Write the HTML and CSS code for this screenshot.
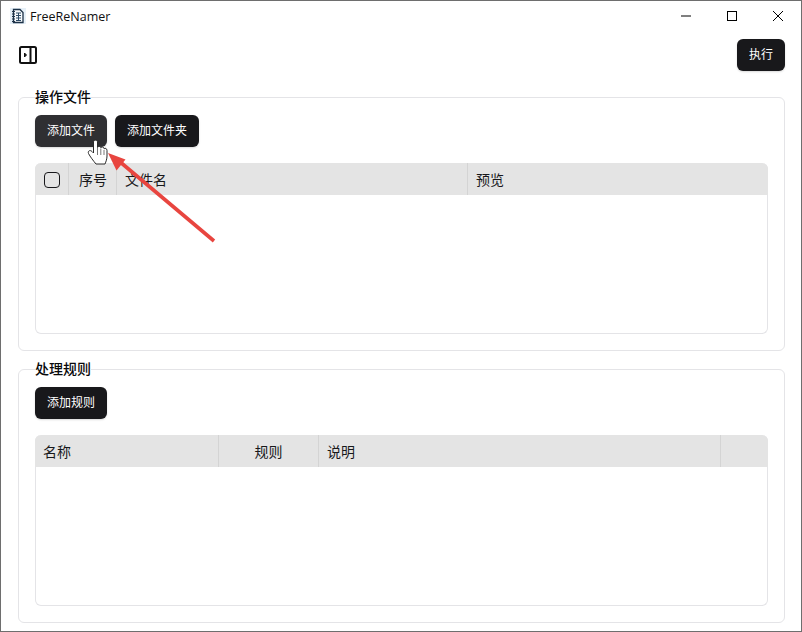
FILE: index.html
```html
<!DOCTYPE html>
<html lang="zh">
<head>
    <meta charset="UTF-8">
    <title>FreeReNamer</title>
    <link rel="stylesheet" href="styles.css">
</head>
<body>
    <div class="window">
        <div class="titlebar">
            <svg class="app-icon" width="16" height="16" viewBox="0 0 16 16">
                <rect x="0" y="0" width="16" height="16" fill="#e6f0f8"/>
                <path d="M3.500 1.500H10L13 4.500V14.500H3.500Z" fill="#f6fafd" stroke="#1d3248" stroke-width="1.300"/>
                <path d="M2 3.500H5M2 6H5M2 8.500H5M2 11H5M2 13.500H5" stroke="#1d3248" stroke-width="1.100"/>
                <path d="M6 5H11M6 7.500H11M6 10H11M6 12.500H11" stroke="#2c4a66" stroke-width="1.200"/>
                <path d="M8.500 5V13" stroke="#2c4a66" stroke-width="1"/>
            </svg>
            <span class="app-title">FreeReNamer</span>
            <div class="win-controls">
                <svg width="46" height="30" viewBox="0 0 46 30"><path d="M18 15H28" stroke="#000"/></svg>
                <svg width="46" height="30" viewBox="0 0 46 30"><rect x="18.500" y="10.500" width="9" height="9" fill="none" stroke="#000"/></svg>
                <svg width="46" height="30" viewBox="0 0 46 30"><path d="M18 10L28 20M28 10L18 20" stroke="#000" fill="none"/></svg>
            </div>
        </div>

        <div class="toolbar">
            <svg class="sidebar-icon" width="20" height="20" viewBox="0 0 20 20">
                <rect x="2" y="2" width="16" height="16" rx="1.500" fill="none" stroke="#111" stroke-width="2"/>
                <path d="M12.500 2V18" stroke="#111" stroke-width="2"/>
                <path d="M6.500 8L8.500 10L6.500 12Z" fill="#111" stroke="#111"/>
            </svg>
            <button class="btn">执行</button>
        </div>

        <fieldset class="group">
            <legend>操作文件</legend>
            <div class="actions">
                <button class="btn btn-hover">添加文件</button>
                <button class="btn">添加文件夹</button>
            </div>
            <div class="table">
                <div class="table-head">
                    <div class="cell cell-check"><span class="checkbox"></span></div>
                    <div class="cell cell-index">序号</div>
                    <div class="cell cell-file">文件名</div>
                    <div class="cell cell-grow">预览</div>
                </div>
            </div>
        </fieldset>

        <fieldset class="group">
            <legend>处理规则</legend>
            <div class="actions">
                <button class="btn">添加规则</button>
            </div>
            <div class="table">
                <div class="table-head">
                    <div class="cell cell-name">名称</div>
                    <div class="cell cell-rule">规则</div>
                    <div class="cell cell-grow">说明</div>
                    <div class="cell cell-op"></div>
                </div>
            </div>
        </fieldset>

        <!-- annotation over the page -->
        <svg class="annotation" width="802" height="632" viewBox="0 0 802 632">
            <path d="M214 241L119 161" stroke="#e8453f" stroke-width="3.600" fill="none"/>
            <path d="M108 153L125.500 159.500L116.500 170.500Z" fill="#e8453f"/>
            <path d="M96 164C93.500 161 90 156.500 88.500 153.500C87.500 151 90 149.500 92 151.500L93.500 153V142C93.500 139.500 97.500 139.500 97.500 142V147.500C98 146 100.500 146 101 147.800C101.500 146.500 104 146.800 104.200 148.800C105 147.800 107 148.300 107 150.500V156C107 159 106 161.500 105 164Z" fill="#fff" stroke="#2a2a2a" stroke-width="1"/>
            <path d="M97.500 148V155M100.800 148.500V155M104 150V155" stroke="#555" stroke-width="0.800"/>
        </svg>
    </div>
</body>
</html>
```

FILE: styles.css
```css
/* General Styles */
html, body {
    margin: 0;
    padding: 0;
    background: #fff;
}

body {
    font-family: "Noto Sans CJK SC", "Noto Sans", sans-serif;
    color: #18181b;
}

.window {
    position: relative;
    box-sizing: border-box;
    width: 802px;
    height: 632px;
    border: 1px solid #6e6e6e;
    overflow: hidden;
}

/* Title bar */
.titlebar {
    display: flex;
    align-items: center;
    height: 30px;
    padding-left: 9px;
}

.app-icon {
    margin-right: 4px;
}

.app-title {
    font-family: "Open Sans", "Noto Sans", sans-serif;
    font-size: 12.5px;
    color: #111;
}

.win-controls {
    display: flex;
    margin-left: auto;
}

.win-controls svg {
    display: block;
}

/* Toolbar */
.toolbar {
    display: flex;
    align-items: center;
    justify-content: space-between;
    height: 32px;
    margin-top: 8px;
    padding: 0 16px 0 17px;
}

.sidebar-icon {
    display: block;
}

.btn {
    box-sizing: border-box;
    height: 32px;
    padding: 0 12px 4px;
    border: 0;
    border-radius: 6px;
    background: #18181b;
    color: #fff;
    font-family: inherit;
    font-size: 12px;
    box-shadow: 0 1px 2px rgba(0, 0, 0, 0.15);
}

.btn-hover {
    background: #2f2f32;
}

/* Groups */
.group {
    box-sizing: border-box;
    height: 264px;
    margin: 0 16px 8px 17px;
    padding: 0 16px 16px;
    border: 1px solid #e4e4e7;
    border-radius: 6px;
    min-width: 0;
}

.toolbar + .group {
    margin-top: 16px;
}

.group legend {
    padding: 0 0 2px;
    font-size: 14px;
    font-weight: 500;
    line-height: 18px;
    color: #09090b;
}

.actions {
    display: flex;
    gap: 8px;
    margin-top: 8px;
}

.table {
    box-sizing: border-box;
    height: 171px;
    margin-top: 16px;
    border: 1px solid #e4e4e7;
    border-top: 0;
    border-radius: 6px;
}

.table-head {
    display: flex;
    height: 32px;
    margin: 0 -1px;
    background: #e4e4e4;
    border-radius: 6px 6px 0 0;
    font-size: 14px;
    line-height: 32px;
}

.cell {
    box-sizing: border-box;
    padding: 0 8px;
    border-right: 1px solid #d4d4d4;
}

.cell-check {
    display: flex;
    align-items: center;
    justify-content: center;
    width: 34px;
    padding: 2px 0 0;
}

.checkbox {
    box-sizing: border-box;
    width: 16px;
    height: 16px;
    border: 1px solid #18181b;
    border-radius: 4px;
}

.cell-index {
    width: 48px;
    padding-left: 10px;
}

.cell-file {
    width: 351px;
}

.cell-name {
    width: 184px;
}

.cell-rule {
    width: 100px;
    text-align: center;
}

.cell-grow {
    flex: 1;
}

.cell-op {
    width: 47px;
    border-right: 0;
}

.cell-grow:last-child {
    border-right: 0;
}

/* Annotation */
.annotation {
    position: absolute;
    top: -1px;
    left: -1px;
    pointer-events: none;
}
```
